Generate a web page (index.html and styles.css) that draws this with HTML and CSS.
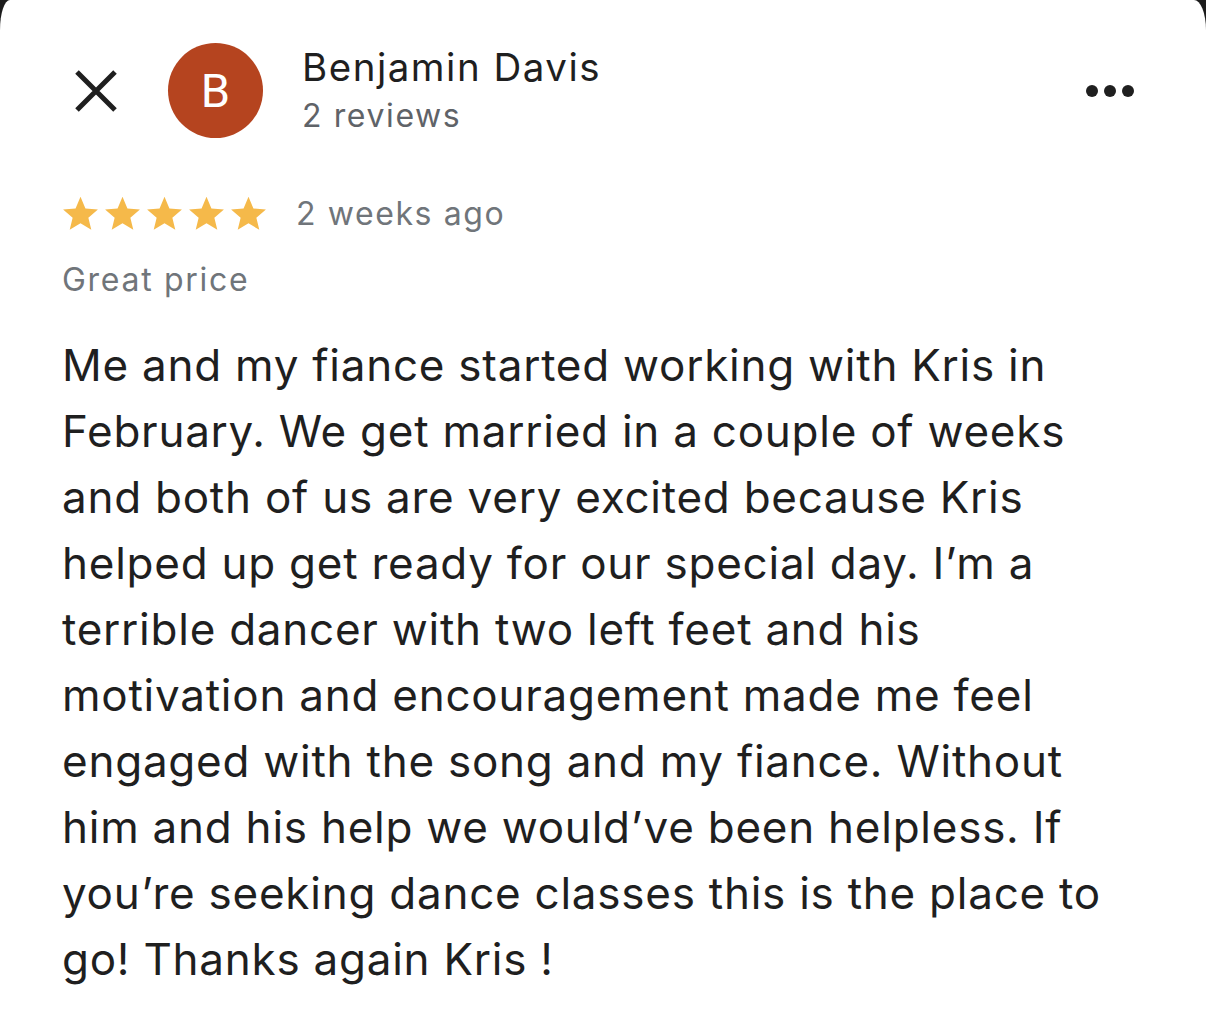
FILE: index.html
```html
<!DOCTYPE html>
<html>
<head>
<meta charset="utf-8">
<link rel="stylesheet" href="styles.css">
</head>
<body>
<div class="card">
  <header class="header">
    <button class="close" aria-label="Close">
      <svg width="42" height="42" viewBox="0 0 42 42"><path d="M2 2 L40 40 M40 2 L2 40" stroke="#1f1f1f" stroke-width="5" fill="none"/></svg>
    </button>
    <div class="avatar">B</div>
    <div class="who">
      <div class="name">Benjamin Davis</div>
      <div class="count">2 reviews</div>
    </div>
    <div class="more"><span></span><span></span><span></span></div>
  </header>
  <div class="meta">
    <div class="stars">
      <svg viewBox="0 0 24 24"><path d="M12 1.2l3.2 7.5 8.1.7-6.2 5.3 1.9 7.9L12 18.4l-7 4.2 1.9-7.9L.7 9.4l8.1-.7z"/></svg>
      <svg viewBox="0 0 24 24"><path d="M12 1.2l3.2 7.5 8.1.7-6.2 5.3 1.9 7.9L12 18.4l-7 4.2 1.9-7.9L.7 9.4l8.1-.7z"/></svg>
      <svg viewBox="0 0 24 24"><path d="M12 1.2l3.2 7.5 8.1.7-6.2 5.3 1.9 7.9L12 18.4l-7 4.2 1.9-7.9L.7 9.4l8.1-.7z"/></svg>
      <svg viewBox="0 0 24 24"><path d="M12 1.2l3.2 7.5 8.1.7-6.2 5.3 1.9 7.9L12 18.4l-7 4.2 1.9-7.9L.7 9.4l8.1-.7z"/></svg>
      <svg viewBox="0 0 24 24"><path d="M12 1.2l3.2 7.5 8.1.7-6.2 5.3 1.9 7.9L12 18.4l-7 4.2 1.9-7.9L.7 9.4l8.1-.7z"/></svg>
    </div>
    <span class="when">2 weeks ago</span>
  </div>
  <div class="tag">Great price</div>
  <p class="body">Me and my fiance started working with Kris in February. We get married in a couple of weeks and both of us are very excited because Kris helped up get ready for our special day. I’m a terrible dancer with two left feet and his motivation and encouragement made me feel engaged with the song and my fiance. Without him and his help we would’ve been helpless. If you’re seeking dance classes this is the place to go! Thanks again Kris !</p>
</div>
</body>
</html>
```

FILE: styles.css
```css
html, body {
  margin: 0;
  padding: 0;
  background: #1c1c1c;
}
body {
  font-family: Inter, Roboto, "Noto Sans", sans-serif;
  color: #1f1f1f;
}
.card {
  background: #fff;
  min-height: 1011px;
  border-top-left-radius: 10px 30px;
  border-top-right-radius: 12px 30px;
  box-sizing: border-box;
  padding: 43px 0 0 62px;
}
.header {
  display: flex;
  align-items: center;
  height: 95px;
}
.close {
  border: 0;
  background: none;
  padding: 0;
  margin: 0 0 0 13px;
  width: 42px;
  height: 42px;
  display: flex;
}
.avatar {
  width: 95px;
  height: 95px;
  border-radius: 50%;
  background: #b5441f;
  color: #fff;
  display: flex;
  align-items: center;
  justify-content: center;
  font-family: Roboto, sans-serif;
  font-size: 47px;
  margin-left: 51px;
  flex: none;
}
.who {
  margin-left: 39px;
  flex: 1;
  margin-top: 2px;
}
.name {
  font-size: 38.5px;
  line-height: 46px;
  letter-spacing: 1.5px;
  color: #1f1f1f;
}
.count {
  font-size: 32px;
  line-height: 46px;
  letter-spacing: 1.6px;
  color: #5f6368;
  margin-top: 3px;
}
.more {
  display: flex;
  gap: 6px;
  margin-right: 72px;
}
.more span {
  width: 12px;
  height: 12px;
  border-radius: 50%;
  background: #1f1f1f;
}
.meta {
  display: flex;
  align-items: center;
  margin-top: 56px;
  height: 38px;
}
.stars {
  display: flex;
  gap: 5px;
}
.stars svg {
  width: 37px;
  height: 37px;
  fill: #f5b94a;
}
.when {
  margin-left: 29px;
  font-size: 32px;
  letter-spacing: 1.6px;
  color: #70757a;
}
.tag {
  margin-top: 28px;
  font-size: 32px;
  line-height: 40px;
  letter-spacing: 1.7px;
  color: #70757a;
}
.body {
  margin: 32px 0 0;
  font-size: 44px;
  line-height: 66px;
  letter-spacing: 0.75px;
  color: #1f1f1f;
  width: 1052px;
}
```
